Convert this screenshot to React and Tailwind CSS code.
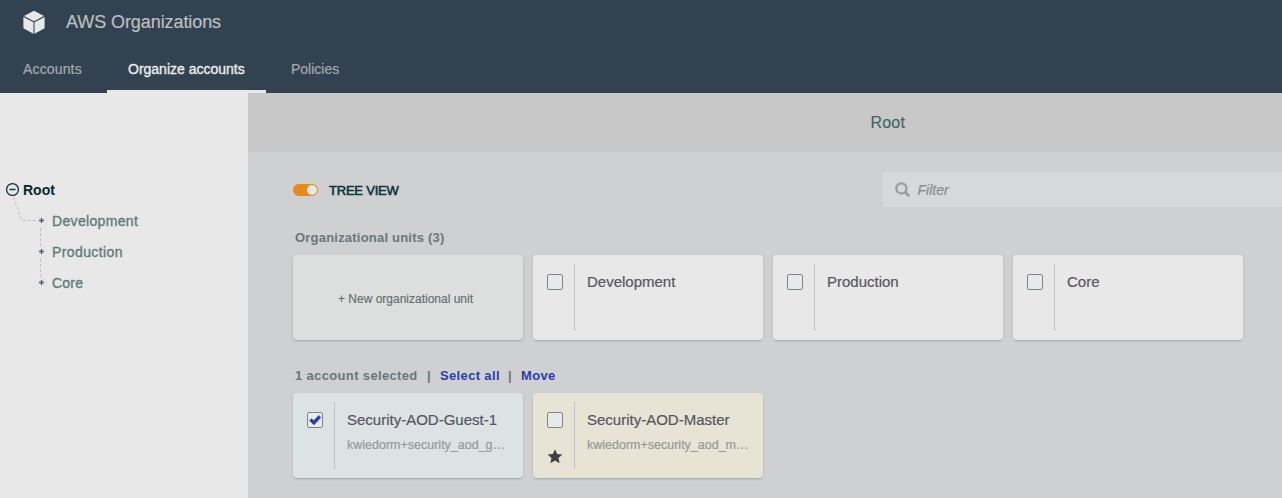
const Card = ({ title, sub, className = "bg-[#e8e8e8]", checked, star }) => (
  <div className={`flex h-[85px] w-[230px] shrink-0 rounded-[4px] shadow-[0_1px_2px_rgba(0,0,0,0.22)] ${className}`}>
    <div className="my-[9px] flex w-[42px] flex-col items-start border-r border-[#c0c2c5] pt-[10px] pl-[14px]">
      <span className="flex size-4 items-center justify-center rounded-[2px] border border-[#7b8787] bg-[#e8e9ea]">
        {checked && (
          <svg className="size-[14px] shrink-0" viewBox="0 0 14 14">
            <path d="M1.6 7.6 3.6 5.7 5.7 7.8 10.8 2.5 12.8 4.4 5.9 11.9Z" fill="#2a39ae" stroke="#2a39ae" strokeWidth=".6" />
          </svg>
        )}
      </span>
      {star && (
        <svg className="mt-[21px] h-[15px] w-4" viewBox="0 0 16 15">
          <path d="M8 .2 10.2 5.1 15.4 5.6 11.5 9.1 12.6 14.3 8 11.6 3.4 14.3 4.5 9.1 .6 5.6 5.8 5.1Z" fill="#404040" />
        </svg>
      )}
    </div>
    <div className="pt-[17px] pl-[12px]">
      <div className="text-[15px] leading-5 whitespace-nowrap text-[#565563] [-webkit-text-stroke:0.2px]">{title}</div>
      {sub && <div className="mt-[7px] text-[12.5px] leading-4 whitespace-nowrap text-[#969899] [-webkit-text-stroke:0.2px]">{sub}</div>}
    </div>
  </div>
);

const Cube = () => (
  <svg className="mb-[2px] h-6 w-[22px]" viewBox="0 0 22 24">
    <path d="M11 .8 21 6 11 11.2 1 6Z" fill="#e8e8e8" />
    <path d="M.4 7 10.4 12.2V23.7L.4 18.3Z" fill="#e8e8e8" />
    <path d="M21.6 7 11.6 12.2V23.7L21.6 18.3Z" fill="#e8e8e8" />
    <path d="M11 12V23.7" stroke="#8d959d" strokeWidth="1.4" />
  </svg>
);

const Tree = () => (
  <div className="flex pt-[81px] pl-[5px]">
    <svg className="mt-[8px] h-[120px] w-[47px] shrink-0" viewBox="0 0 47 120">
      <circle cx="7.5" cy="7.5" r="5.9" fill="none" stroke="#0c3439" strokeWidth="1.3" />
      <path d="M4.5 7.5H10.5" stroke="#0c3439" strokeWidth="1.5" />
      <path d="M8.5 15.5 16.8 38.5H31M35.5 46V65M35.5 77V96" fill="none" stroke="#b8c3c1" strokeDasharray="3 2" />
      {[38.5, 69.5, 100.5].map((y) => (
        <g key={y}>
          <circle cx="36.5" cy={y} r="6" fill="#e4e6e7" />
          <path d={`M34 ${y}h5M36.5 ${y - 2.5}v5`} stroke="#4b6266" strokeWidth="1.4" />
        </g>
      ))}
    </svg>
    <div className="pt-px text-[14px] leading-[31px] text-[#617a7b]">
      <div className="-ml-[29px] font-bold text-[#06292f]">Root</div>
      <div className="tracking-[0.34px] [-webkit-text-stroke:0.35px]">Development</div>
      <div className="tracking-[0.4px] [-webkit-text-stroke:0.35px]">Production</div>
      <div className="tracking-[0.2px] [-webkit-text-stroke:0.35px]">Core</div>
    </div>
  </div>
);

export default function App() {
  return (
    <div className="flex h-[498px] w-[1282px] flex-col overflow-hidden bg-[#cfd0d1] font-['Liberation_Sans',Arial,sans-serif]">
      <header className="flex h-[93px] shrink-0 flex-col bg-[#334250]">
        <div className="flex h-[45px] items-center pl-[23px]">
          <Cube />
          <h1 className="pl-[21px] text-[18px] tracking-[-0.08px] text-[#bdbfc0] [-webkit-text-stroke:0.2px]">AWS Organizations</h1>
        </div>
        <nav className="flex h-12 text-[14px] leading-[49px] text-[#a3abb1]">
          <a className="w-[107px] pl-[23px] tracking-[0.15px] [-webkit-text-stroke:0.2px]">Accounts</a>
          <a className="w-[159px] border-b-[3px] border-[#e8e8e8] pl-[21px] text-[#ededed] [-webkit-text-stroke:0.35px]">Organize accounts</a>
          <a className="pl-[25px] [-webkit-text-stroke:0.2px]">Policies</a>
        </nav>
      </header>
      <div className="flex flex-1">
        <aside className="w-[248px] shrink-0 bg-[#e8e8e8]">
          <Tree />
        </aside>
        <main className="flex min-w-0 flex-1 flex-col">
          <div className="h-[59px] bg-[#c8c8c8] pl-[622.5px] text-[16px] leading-[59px] tracking-[0.2px] text-[#3d6264] [-webkit-text-stroke:0.1px]">Root</div>
          <div className="flex flex-col pl-[45px]">
            <div className="mt-5 flex h-[35px] items-center">
              <span className="flex h-3 w-[25px] items-center justify-end rounded-full bg-[#e68a1b] pr-px">
                <span className="size-[10px] rounded-full bg-[#e8e8e8]" />
              </span>
              <span className="w-[565px] pt-[2px] pl-[11px] text-[13px] tracking-[-0.22px] text-[#0b3236] [-webkit-text-stroke:0.55px]">TREE VIEW</span>
              <div className="flex h-[35px] flex-1 items-center rounded-l-[2px] bg-[#d7d8d9] pl-[11.5px]">
                <svg className="size-[15px]" viewBox="0 0 15 15" fill="none" stroke="#9a9b9c" strokeWidth="2.3">
                  <circle cx="6.4" cy="6.4" r="5.1" />
                  <path d="m10 10 4.2 4.2" strokeWidth="2.6" />
                </svg>
                <span className="pt-[2px] pl-[8px] text-[14px] text-[#8c8d8e] italic [-webkit-text-stroke:0.2px]">Filter</span>
              </div>
            </div>
            <h2 className="mt-[22px] h-[26px] pl-[2px] text-[13px] leading-[17px] font-bold tracking-[0.21px] text-[#69777a]">Organizational units (3)</h2>
            <div className="flex gap-[10px]">
              <div className="flex h-[85px] w-[230px] items-center justify-center rounded-[4px] bg-[#dddfde] pt-[2px] pr-[5px] text-[12px] text-[#5d6f6e] shadow-[0_1px_2px_rgba(0,0,0,0.22)] [-webkit-text-stroke:0.15px]">+ New organizational unit</div>
              <Card title="Development" />
              <Card title="Production" />
              <Card title="Core" />
            </div>
            <div className="mt-[27px] flex h-[26px] pl-[2px] text-[13px] leading-[17px] font-bold tracking-[0.35px] text-[#69777a]">
              <span className="w-[132px]">1 account selected</span>
              <span className="w-[13px]">|</span>
              <a className="w-[68px] text-[#2b3cac]">Select all</a>
              <span className="w-[13px]">|</span>
              <a className="text-[#2b3cac]">Move</a>
            </div>
            <div className="flex gap-[10px]">
              <Card title="Security-AOD-Guest-1" sub="kwiedorm+security_aod_g…" className="bg-[#dde3e5]" checked />
              <Card title="Security-AOD-Master" sub="kwiedorm+security_aod_m…" className="bg-[#e8e4d5]" star />
            </div>
          </div>
        </main>
      </div>
    </div>
  );
}
